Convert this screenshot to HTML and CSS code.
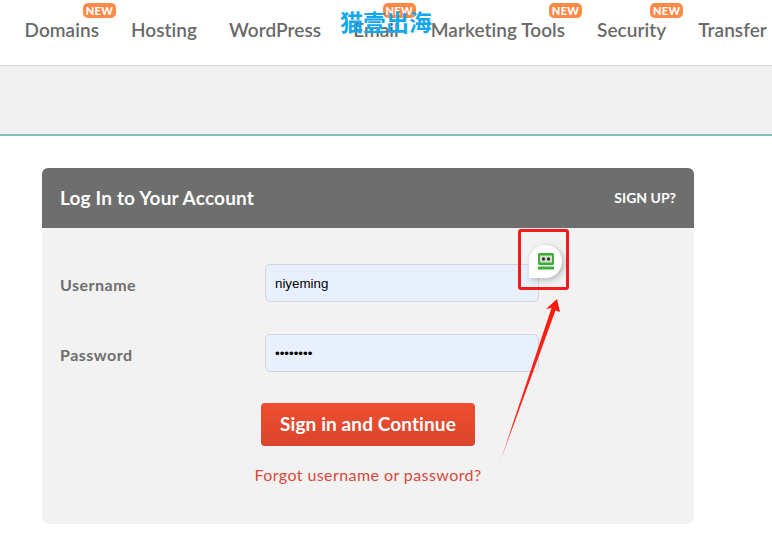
FILE: index.html
```html
<!DOCTYPE html>
<html lang="en">
<head>
  <meta charset="UTF-8" />
  <title>Log In to Your Account</title>
  <link rel="stylesheet" href="styles.css">
</head>
<body>
  <nav class="topnav">
    <a class="nav-item">Domains<span class="new">NEW</span></a>
    <a class="nav-item">Hosting</a>
    <a class="nav-item">WordPress</a>
    <a class="nav-item">Email<span class="new">NEW</span></a>
    <a class="nav-item">Marketing Tools<span class="new">NEW</span></a>
    <a class="nav-item">Security<span class="new">NEW</span></a>
    <a class="nav-item">Transfer</a>
  </nav>
  <div class="band"></div>

  <main class="content">
    <section class="card">
      <header class="card-head">
        <h1>Log In to Your Account</h1>
        <a class="signup">SIGN UP?</a>
      </header>
      <form class="card-body">
        <div class="row">
          <label for="username">Username</label>
          <input type="text" id="username" value="niyeming" />
        </div>
        <div class="row">
          <label for="password">Password</label>
          <input type="password" id="password" value="niyeming" />
        </div>
        <div class="actions">
          <button type="button" class="submit-btn">Sign in and Continue</button>
          <a class="forgot">Forgot username or password?</a>
        </div>
      </form>
    </section>
  </main>

  <!-- stuff drawn over the screenshot -->
  <div class="watermark">猫壹出海</div>
  <div class="mark-box"></div>
  <div class="robo">
    <svg width="18" height="18" viewBox="0 0 18 18">
      <rect x="1" y="0" width="16" height="12" rx="1.5" fill="#3cae36"/>
      <rect x="3" y="2.5" width="12" height="7" fill="#d5dfd2"/>
      <circle cx="6.5" cy="6" r="1.7" fill="#2f3a2f"/>
      <circle cx="11.5" cy="6" r="1.7" fill="#2f3a2f"/>
      <rect x="1" y="13.5" width="16" height="3" fill="#3cae36"/>
    </svg>
  </div>
  <svg class="arrow" width="70" height="180" viewBox="0 0 70 180">
    <defs>
      <linearGradient id="tail" x1="0" y1="1" x2="0" y2="0">
        <stop offset="0" stop-color="#ffc4bc"/>
        <stop offset="0.25" stop-color="#fb2a1a"/>
        <stop offset="1" stop-color="#fb1a0e"/>
      </linearGradient>
    </defs>
    <polygon points="4,170 56.5,13 51,14 62,4 65,17 60.5,15.5" fill="url(#tail)"/>
  </svg>
</body>
</html>
```

FILE: styles.css
```css
* { box-sizing: border-box; margin: 0; padding: 0; }
body {
  margin: 0;
  font-family: Lato, "Liberation Sans", sans-serif;
  background: #fff;
  color: #666;
  height: 543px;
  overflow: hidden;
  position: relative;
}
.topnav {
  display: flex;
  gap: 32px;
  height: 66px;
  padding: 18px 0 0 24.5px;
  border-bottom: 1px solid #d6d6d6;
  white-space: nowrap;
  overflow: hidden;
}
.nav-item {
  position: relative;
  font-size: 19px;
  font-weight: 600;
  letter-spacing: 0.05px;
  line-height: 23px;
  color: #6a6a6a;
}
.new {
  position: absolute;
  top: -15px;
  right: -17px;
  width: 33px;
  height: 15px;
  background: #ff8a47;
  border-radius: 5px;
  color: #fff;
  font-size: 11px;
  font-weight: 900;
  line-height: 15px;
  text-align: center;
  letter-spacing: 0.4px;
}
.band {
  height: 70px;
  background: #f0f0f0;
  border-bottom: 2px solid #80bfb8;
}
.content {
  padding: 32px 78px 0 42px;
}
.card {
  background: #f2f2f2;
  border-radius: 6px;
  height: 356px;
  overflow: hidden;
}
.card-head {
  display: flex;
  align-items: center;
  justify-content: space-between;
  height: 60px;
  padding: 0 18px 2px;
  background: #6e6e6e;
  color: #fff;
}
.card-head h1 {
  font-size: 19px;
  font-weight: 700;
  letter-spacing: 0.18px;
}
.signup {
  font-size: 14px;
  font-weight: 700;
}
.card-body {
  padding: 36px 18px 0;
}
.row {
  display: flex;
  align-items: center;
  height: 38px;
  margin-bottom: 32px;
}
.row label {
  width: 205px;
  padding-top: 2px;
  font-size: 16px;
  font-weight: 700;
  letter-spacing: 0.5px;
  color: #6e6e6e;
}
.row input {
  width: 274px;
  height: 38px;
  padding: 0 9px;
  border: 1px solid #d3d5dc;
  border-radius: 5px;
  background: #e8f0fe;
  font-family: "Liberation Sans", sans-serif;
  font-size: 13.33px;
  color: #000;
}
.actions {
  display: flex;
  flex-direction: column;
  align-items: center;
  gap: 20px;
  width: 616px;
  margin-top: -1px;
}
.submit-btn {
  width: 214px;
  height: 43px;
  padding-bottom: 2px;
  border: none;
  border-radius: 4px;
  background: linear-gradient(#f04e30, #d9452c);
  color: #fff;
  font-family: inherit;
  font-size: 19px;
  font-weight: 700;
  letter-spacing: 0.1px;
}
.forgot {
  font-size: 16px;
  font-weight: 400;
  color: #d9483a;
  letter-spacing: 0.42px;
  margin-top: -1px;
}
.watermark {
  position: absolute;
  left: 340px;
  top: 8px;
  font-family: "Noto Sans CJK SC", sans-serif;
  font-size: 23px;
  font-weight: 700;
  line-height: 27px;
  color: #12a8ee;
}
.mark-box {
  position: absolute;
  left: 518px;
  top: 229px;
  width: 51px;
  height: 61px;
  border: 3px solid #f01c1c;
  border-radius: 3px;
}
.robo {
  position: absolute;
  left: 529px;
  top: 245px;
  width: 33px;
  height: 33px;
  display: flex;
  align-items: center;
  justify-content: center;
  background: #fff;
  border-radius: 50% 50% 50% 0;
  box-shadow: 2px 2px 6px rgba(0,0,0,0.25);
}
.arrow {
  position: absolute;
  left: 495px;
  top: 295px;
}
```
